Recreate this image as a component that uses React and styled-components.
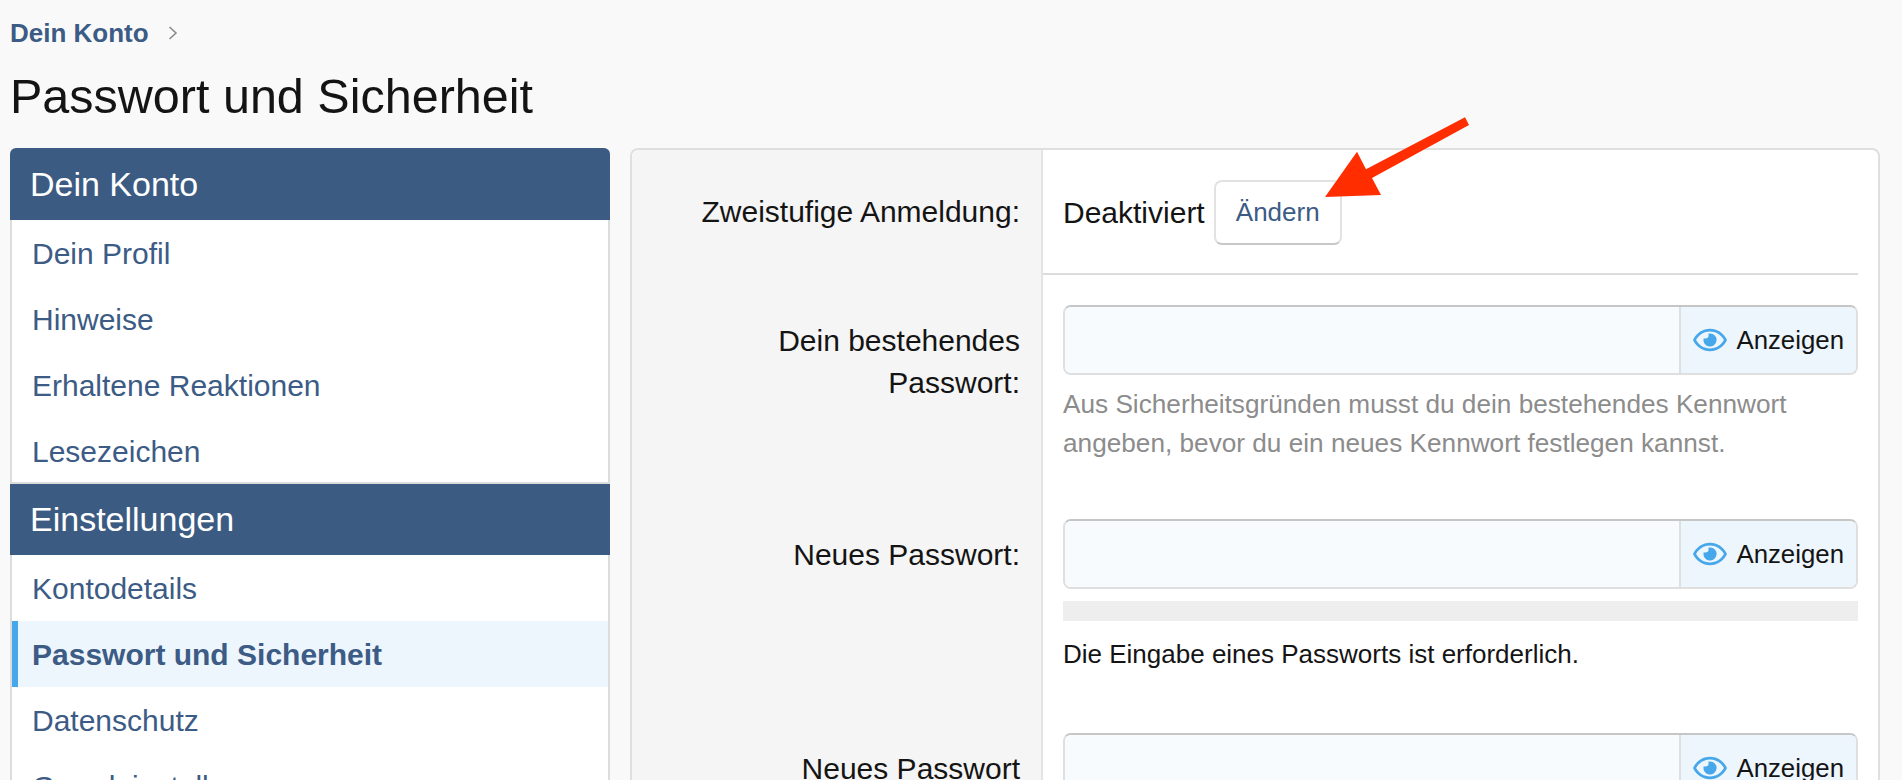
import React from "react";
import styled, { createGlobalStyle } from "styled-components";
import { FaRegEye } from "react-icons/fa";

const GlobalStyle = createGlobalStyle`
  * {
    box-sizing: border-box;
  }
  html, body {
    margin: 0;
    padding: 0;
    overflow: hidden;
    background: #f9f9f9;
  }
  body {
    font-family: "Liberation Sans", Arial, sans-serif;
    color: #141414;
  }
`;

const Page = styled.div`
  position: relative;
  height: 780px;
  padding: 15px 22px 0 10px;
  overflow: hidden;
`;

const Breadcrumb = styled.div`
  display: flex;
  align-items: center;
  gap: 19px;
  height: 36px;
  font-size: 26px;
  font-weight: bold;
  color: #3c5b85;
`;

const Crumb = styled.svg`
  width: 10px;
  height: 14px;
  fill: none;
  stroke: #8c8c8c;
  stroke-width: 1.6;
`;

const Title = styled.h1`
  margin: 15px 0 22px;
  font-size: 48.5px;
  font-weight: normal;
  line-height: 60px;
`;

const Main = styled.div`
  display: flex;
  align-items: flex-start;
  gap: 20px;
`;

const Sidebar = styled.nav`
  flex: 0 0 600px;
`;

const SideHeader = styled.div`
  height: ${(props) => props.$height}px;
  padding-left: 20px;
  border-radius: ${(props) => (props.$first ? "6px 6px 0 0" : "0")};
  background: #3c5b82;
  color: #fff;
  font-size: 34px;
  line-height: ${(props) => props.$height}px;
`;

const SideList = styled.div`
  background: #fff;
  border-left: 2px solid #dcdcdc;
  border-right: 2px solid #dcdcdc;
  box-shadow: inset 0 -2px 0 #dcdcdc;
`;

const SideItem = styled.a`
  display: block;
  height: 66px;
  padding-left: ${(props) => (props.$active ? "14px" : "20px")};
  border-left: ${(props) => (props.$active ? "6px solid #47a7eb" : "none")};
  background: ${(props) => (props.$active ? "#edf5fd" : "transparent")};
  color: #3c5b85;
  font-size: 30px;
  font-weight: ${(props) => (props.$active ? "bold" : "normal")};
  line-height: 68px;
`;

const Panel = styled.div`
  flex: 1;
  overflow: hidden;
  background: #fff;
  border: 2px solid #dfdfdf;
  border-radius: 8px;
`;

const Row = styled.div`
  display: flex;
`;

const Label = styled.div`
  flex: 0 0 411px;
  padding: ${(props) => props.$top}px 21px 0 40px;
  background: #f5f5f5;
  border-right: 2px solid #e4e4e4;
  font-size: 30px;
  line-height: 42px;
  text-align: right;
`;

const Content = styled.div`
  flex: 1;
  padding: ${(props) => props.$top}px 20px ${(props) => props.$bottom}px 20px;
`;

const StatusContent = styled.div`
  flex: 1;
  display: flex;
  align-items: center;
  gap: 9px;
  margin-right: 20px;
  padding: 30px 0 28px 20px;
  border-bottom: 2px solid #dcdcdc;
  font-size: 30px;
`;

const Button = styled.button`
  width: 128px;
  height: 65px;
  padding: 0;
  background: #fff;
  border: 2px solid #e2e2e2;
  border-bottom-color: #c8c8c8;
  border-radius: 8px;
  color: #3c5b85;
  font-family: inherit;
  font-size: 26px;
`;

const InputGroup = styled.div`
  display: flex;
  height: 70px;
  border: 2px solid #dfdfdf;
  border-top-color: #c6c6c6;
  border-radius: 8px;
  overflow: hidden;
`;

const Field = styled.input`
  flex: 1;
  min-width: 0;
  border: none;
  outline: none;
  background: #f8fbfe;
`;

const Reveal = styled.div`
  display: flex;
  align-items: center;
  gap: 9px;
  padding: 0 12px;
  background: #edf5fd;
  border-left: 2px solid #dfdfdf;
  font-size: 25.8px;
`;

const Eye = styled(FaRegEye)`
  width: 34px;
  height: 30px;
  color: #47a7eb;
`;

const Hint = styled.div`
  margin-top: 10px;
  color: #8c8c8c;
  font-size: 26.2px;
  line-height: 39px;
`;

const Strength = styled.div`
  height: 20px;
  margin-top: 12px;
  background: #eee;
`;

const Message = styled.div`
  margin-top: 14px;
  font-size: 26px;
  line-height: 39px;
`;

const Arrow = styled.svg`
  position: absolute;
  top: 100px;
  left: 1300px;
  width: 200px;
  height: 120px;
  fill: #ff2d00;
`;

const PasswordInput = () => (
  <InputGroup>
    <Field type="password" />
    <Reveal>
      <Eye />
      Anzeigen
    </Reveal>
  </InputGroup>
);

const App = () => {
  return (
    <Page>
      <GlobalStyle />
      <Breadcrumb>
        Dein Konto
        <Crumb viewBox="0 0 10 14">
          <path d="M1.5 1l6.5 6-6.5 6" />
        </Crumb>
      </Breadcrumb>
      <Title>Passwort und Sicherheit</Title>
      <Main>
        <Sidebar>
          <SideHeader $first $height={72}>Dein Konto</SideHeader>
          <SideList>
            <SideItem>Dein Profil</SideItem>
            <SideItem>Hinweise</SideItem>
            <SideItem>Erhaltene Reaktionen</SideItem>
            <SideItem>Lesezeichen</SideItem>
          </SideList>
          <SideHeader $height={71}>Einstellungen</SideHeader>
          <SideList>
            <SideItem>Kontodetails</SideItem>
            <SideItem $active>Passwort und Sicherheit</SideItem>
            <SideItem>Datenschutz</SideItem>
            <SideItem>Grundeinstellungen</SideItem>
          </SideList>
        </Sidebar>
        <Panel>
          <Row>
            <Label $top={41}>Zweistufige Anmeldung:</Label>
            <StatusContent>
              Deaktiviert
              <Button>Ändern</Button>
            </StatusContent>
          </Row>
          <Row>
            <Label $top={45}>Dein bestehendes Passwort:</Label>
            <Content $top={30} $bottom={26}>
              <PasswordInput />
              <Hint>
                Aus Sicherheitsgründen musst du dein bestehendes Kennwort angeben,
                bevor du ein neues Kennwort festlegen kannst.
              </Hint>
            </Content>
          </Row>
          <Row>
            <Label $top={45}>Neues Passwort:</Label>
            <Content $top={30} $bottom={29}>
              <PasswordInput />
              <Strength />
              <Message>Die Eingabe eines Passworts ist erforderlich.</Message>
            </Content>
          </Row>
          <Row>
            <Label $top={45}>Neues Passwort bestätigen:</Label>
            <Content $top={30} $bottom={20}>
              <PasswordInput />
            </Content>
          </Row>
        </Panel>
      </Main>
      <Arrow viewBox="0 0 200 120">
        <polygon points="165,17.3 169,25 72,78 81,95 25,97 57,51.7 66,69.3" />
      </Arrow>
    </Page>
  );
};

export default App;
